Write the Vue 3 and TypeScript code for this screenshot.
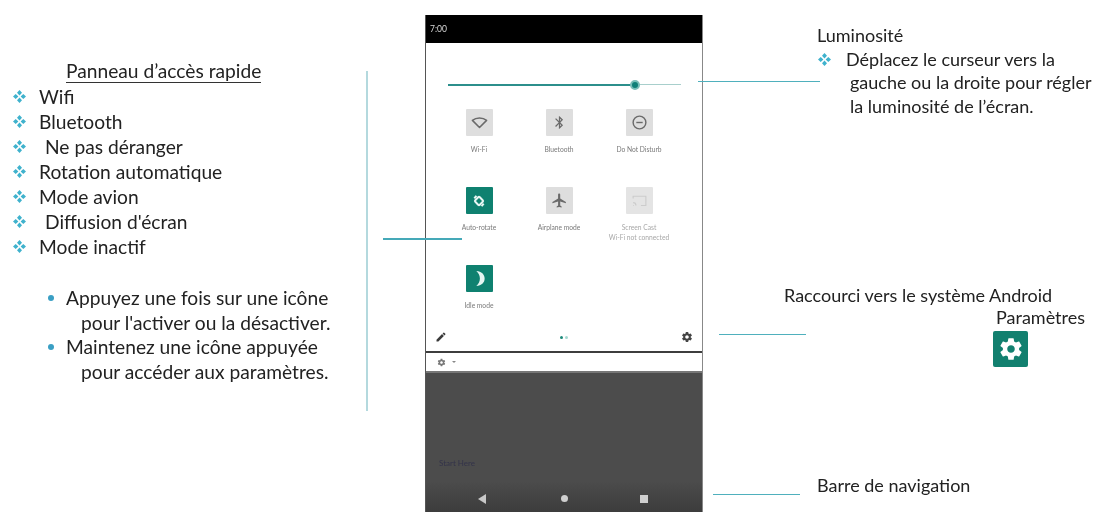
<script setup lang="ts">
interface Tile {
  label: string;
  sub?: string;
  icon: string;
  state: 'off' | 'on' | 'muted';
}

const features = [
  { label: 'Wifi', nudge: false },
  { label: 'Bluetooth', nudge: false },
  { label: 'Ne pas déranger', nudge: true },
  { label: 'Rotation automatique', nudge: false },
  { label: 'Mode avion', nudge: false },
  { label: "Diffusion d'écran", nudge: true },
  { label: 'Mode inactif', nudge: false },
];

const tips = [
  ['Appuyez une fois sur une icône', "pour l'activer ou la désactiver."],
  ['Maintenez une icône appuyée', 'pour accéder aux paramètres.'],
];

const tiles: Tile[] = [
  { label: 'Wi-Fi', icon: 'wifi', state: 'off' },
  { label: 'Bluetooth', icon: 'bluetooth', state: 'off' },
  { label: 'Do Not Disturb', icon: 'dnd', state: 'off' },
  { label: 'Auto-rotate', icon: 'rotate', state: 'on' },
  { label: 'Airplane mode', icon: 'plane', state: 'off' },
  { label: 'Screen Cast', sub: 'Wi-Fi not connected', icon: 'cast', state: 'muted' },
  { label: 'Idle mode', icon: 'moon', state: 'on' },
];

const gearPath =
  'M19.43 12.98c.04-.32.07-.64.07-.98s-.03-.66-.07-.98l2.11-1.65c.19-.15.24-.42.12-.64l-2-3.46c-.12-.22-.39-.3-.61-.22l-2.49 1c-.52-.4-1.08-.73-1.69-.98l-.38-2.65C14.46 2.18 14.25 2 14 2h-4c-.25 0-.46.18-.49.42l-.38 2.65c-.61.25-1.17.59-1.69.98l-2.49-1c-.23-.09-.49 0-.61.22l-2 3.46c-.13.22-.07.49.12.64l2.11 1.65c-.04.32-.07.65-.07.98s.03.66.07.98l-2.11 1.65c-.19.15-.24.42-.12.64l2 3.46c.12.22.39.3.61.22l2.49-1c.52.4 1.08.73 1.69.98l.38 2.65c.03.24.24.42.49.42h4c.25 0 .46-.18.49-.42l.38-2.65c.61-.25 1.17-.59 1.69-.98l2.49 1c.23.09.49 0 .61-.22l2-3.46c.12-.22.07-.49-.12-.64l-2.11-1.65zM12 15.5c-1.93 0-3.5-1.57-3.5-3.5s1.57-3.5 3.5-3.5 3.5 1.57 3.5 3.5-1.57 3.5-3.5 3.5z';

const diamondPath =
  'M6.5 0 9 2.700 6.500 5.400 4 2.700zM6.500 7.600 9 10.300 6.500 13 4 10.300zM2.700 4 5.400 6.500 2.700 9 0 6.500zM10.300 4 13 6.500 10.300 9 7.600 6.500z';

// traits de renvoi entre le téléphone et les légendes
const connectors = [
  { left: 366, top: 71, width: 2, height: 340, color: '#b4d9de' },
  { left: 383, top: 238, width: 79, height: 2, color: '#45a9b8' },
  { left: 698, top: 81, width: 122, height: 1, color: '#4fb0bd' },
  { left: 719, top: 334, width: 87, height: 1, color: '#4fb0bd' },
  { left: 713, top: 494, width: 87, height: 1, color: '#4fb0bd' },
];
</script>

<template>
  <div class="slide">
    <section class="left">
      <h2 class="panel-title">Panneau d’accès rapide</h2>
      <ul class="features">
        <li v-for="f in features" :key="f.label">
          <svg class="diamonds" width="13" height="13" viewBox="0 0 13 13">
            <path :d="diamondPath" />
          </svg>
          <span :class="{ nudge: f.nudge }">{{ f.label }}</span>
        </li>
      </ul>
      <ul class="tips">
        <li v-for="t in tips" :key="t[0]">
          <span class="dot"></span>
          <div>
            <div>{{ t[0] }}</div>
            <div class="indent">{{ t[1] }}</div>
          </div>
        </li>
      </ul>
    </section>

    <section class="phone">
      <div class="status">7:00</div>
      <div class="panel">
        <div class="slider">
          <div class="fill"></div>
          <div class="thumb"></div>
          <div class="rest"></div>
        </div>
        <div class="tiles">
          <div v-for="t in tiles" :key="t.label" class="tile" :class="t.state">
            <div class="tile-box">
              <svg v-if="t.icon === 'wifi'" viewBox="0 0 24 24" width="17" height="17" fill="none" stroke="#6a6a6a" stroke-width="2.200" stroke-linejoin="round">
                <path d="M12 19 2 9C7.500 4.500 16.500 4.500 22 9z" />
              </svg>
              <svg v-else-if="t.icon === 'bluetooth'" viewBox="0 0 24 24" width="15" height="15" fill="#6a6a6a">
                <path d="M17.710 7.710 12 2h-1v7.590L6.410 5 5 6.410 10.590 12 5 17.590 6.410 19 11 14.410V22h1l5.710-5.710-4.300-4.290 4.300-4.290zM13 5.830l1.880 1.880L13 9.590V5.830zm1.880 10.460L13 18.170v-3.760l1.880 1.880z" />
              </svg>
              <svg v-else-if="t.icon === 'dnd'" viewBox="0 0 24 24" width="17" height="17" fill="none" stroke="#6a6a6a" stroke-width="2">
                <circle cx="12" cy="12" r="9" />
                <path d="M7.500 12h9" />
              </svg>
              <svg v-else-if="t.icon === 'rotate'" viewBox="0 0 24 24" width="14" height="14" fill="none" stroke="#e8f6f3" stroke-width="3.400">
                <rect x="6.500" y="6.500" width="11" height="11" rx="2" transform="rotate(45 12 12)" />
                <path d="M4 7.500 7.500 3M20 16.500 16.500 21" />
              </svg>
              <svg v-else-if="t.icon === 'plane'" viewBox="0 0 24 24" width="17" height="17" fill="#6a6a6a">
                <path d="M21 16v-2l-8-5V3.500c0-.83-.67-1.500-1.500-1.500S10 2.670 10 3.500V9l-8 5v2l8-2.500V19l-2 1.500V22l3.500-1 3.500 1v-1.500L13 19v-5.500l8 2.500z" />
              </svg>
              <svg v-else-if="t.icon === 'cast'" viewBox="0 0 24 24" width="17" height="17" fill="none" stroke="#cccccc" stroke-width="1.600">
                <path d="M3 9V6h18v13h-7M3 19h1M3 15c2.500 0 4 1.500 4 4" />
              </svg>
              <svg v-else viewBox="0 0 24 24" width="19" height="19" fill="#e6f5f2">
                <path d="M8 2.500c6.500.5 10.500 4.200 10.500 9.500S14.500 21 8 21.500c3-3 4.500-5.800 4.500-9.500S11 5.500 8 2.500z" />
              </svg>
            </div>
            <div class="tile-label">{{ t.label }}</div>
            <div v-if="t.sub" class="tile-label">{{ t.sub }}</div>
          </div>
        </div>
        <div class="panel-foot">
          <svg viewBox="0 0 24 24" width="12" height="12" fill="#3a3a3a">
            <path d="M3 17.250V21h3.750L17.810 9.940l-3.750-3.750L3 17.250zM20.710 7.040c.39-.39.39-1.020 0-1.410l-2.340-2.340c-.39-.39-1.020-.39-1.410 0l-1.830 1.830 3.750 3.750 1.830-1.830z" />
          </svg>
          <div class="pager"><i></i><i class="faint"></i></div>
          <svg viewBox="0 0 24 24" width="12" height="12" fill="#444">
            <path :d="gearPath" />
          </svg>
        </div>
      </div>
      <div class="strip">
        <svg viewBox="0 0 24 24" width="9" height="9" fill="#777">
          <path :d="gearPath" />
        </svg>
        <span class="caret"></span>
      </div>
      <div class="shade">
        <div class="hint">Start Here</div>
        <div class="nav">
          <span class="back"></span>
          <span class="home"></span>
          <span class="recent"></span>
        </div>
      </div>
    </section>

    <section class="right">
      <div class="brightness">
        <div>Luminosité</div>
        <div class="bright-row">
          <svg class="diamonds" width="13" height="13" viewBox="0 0 13 13">
            <path :d="diamondPath" />
          </svg>
          <span>Déplacez le curseur vers la</span>
        </div>
        <div class="bright-more">gauche ou la droite pour régler</div>
        <div class="bright-more">la luminosité de l’écran.</div>
      </div>
      <div class="shortcut">
        <div>Raccourci vers le système Android</div>
        <div class="shortcut-name">Paramètres</div>
        <div class="settings-tile">
          <svg viewBox="0 0 24 24" width="26" height="26" fill="#fff">
            <path :d="gearPath" />
          </svg>
        </div>
      </div>
      <div class="navbar-note">Barre de navigation</div>
    </section>

    <div
      v-for="(c, i) in connectors"
      :key="i"
      class="connector"
      :style="{ left: c.left + 'px', top: c.top + 'px', width: c.width + 'px', height: c.height + 'px', background: c.color }"
    ></div>
  </div>
</template>

<style scoped>
.slide {
  position: relative;
  display: flex;
  width: 1098px;
  height: 512px;
  overflow: hidden;
  background: #fff;
  font-family: Lato, "Open Sans", sans-serif;
  font-size: 19.2px;
  color: #222;
}

.left {
  width: 425px;
  flex-shrink: 0;
  padding-top: 60px;
  box-sizing: border-box;
  filter: blur(0.3px);
}

.panel-title {
  margin: 0 0 1px 66px;
  width: fit-content;
  font-size: 19.2px;
  font-weight: 400;
  line-height: 22px;
  border-bottom: 1px solid #333;
}

.features {
  margin: 0;
  padding: 0 0 0 13px;
  list-style: none;
  line-height: 25px;
}

.features li {
  display: flex;
  align-items: center;
  gap: 13px;
}

.diamonds {
  flex-shrink: 0;
  fill: #3fb2cd;
}

.nudge {
  margin-left: 6px;
}

.tips {
  margin: 27px 0 0;
  padding: 0 0 0 48px;
  list-style: none;
  line-height: 24.500px;
}

.tips li {
  display: flex;
  gap: 12px;
}

.dot {
  width: 6px;
  height: 6px;
  margin-top: 9px;
  border-radius: 50%;
  background: #3a9fc4;
  flex-shrink: 0;
}

.indent {
  padding-left: 15px;
}

.phone {
  display: flex;
  flex-direction: column;
  width: 278px;
  height: 497px;
  margin-top: 15px;
  flex-shrink: 0;
  box-sizing: border-box;
  border-left: 1px solid #555;
  border-right: 1px solid #888;
  filter: blur(0.5px);
}

.status {
  height: 28px;
  padding: 9px 0 0 4px;
  box-sizing: border-box;
  background: #000;
  color: #d8d8d8;
  font-size: 8.500px;
  line-height: 10px;
}

.panel {
  display: flex;
  flex-direction: column;
  height: 310px;
  box-sizing: border-box;
  background: #fff;
  border-bottom: 2px solid #3d3d3d;
}

.slider {
  position: relative;
  height: 4px;
  margin: 40px 21px 0 22px;
}

.fill {
  position: absolute;
  left: 0;
  top: 0.500px;
  width: 187px;
  height: 2.500px;
  background: #2c8f8c;
}

.rest {
  position: absolute;
  left: 187px;
  right: 0;
  top: 1px;
  height: 1px;
  background: #a8cfcc;
}

.thumb {
  position: absolute;
  left: 182px;
  top: -3px;
  z-index: 1;
  width: 6px;
  height: 6px;
  border: 2px solid #79bdb8;
  border-radius: 50%;
  background: #0f7f78;
}

.tiles {
  display: grid;
  grid-template-columns: repeat(3, 80px);
  grid-template-rows: 78px 78px 56px;
  margin: 22px 0 0 13px;
}

.tile {
  display: flex;
  flex-direction: column;
  align-items: center;
  font-size: 6.700px;
  font-weight: 400;
  line-height: 10px;
  color: #7a7a7a;
}

.tile-box {
  display: flex;
  align-items: center;
  justify-content: center;
  width: 27px;
  height: 27px;
  margin-bottom: 8px;
  border-radius: 1px;
  background: #dedede;
}

.tile.on .tile-box {
  background: #0f8170;
}

.tile.muted .tile-box {
  background: #e4e4e4;
}

.tile.muted .tile-label {
  color: #a8a8a8;
}

.tile-label {
  white-space: nowrap;
}

.panel-foot {
  display: flex;
  align-items: center;
  justify-content: space-between;
  margin-top: auto;
  padding: 0 9px 8px 9px;
}

.pager {
  display: flex;
  gap: 2px;
}

.pager i {
  width: 3px;
  height: 3px;
  border-radius: 50%;
  background: #1e8a7b;
}

.pager i.faint {
  background: #a5d8d0;
}

.strip {
  display: flex;
  align-items: center;
  gap: 6px;
  height: 18px;
  padding-left: 11px;
  background: #fff;
  border-bottom: 2px solid #777;
}

.caret {
  width: 0;
  height: 0;
  border-left: 2px solid transparent;
  border-right: 2px solid transparent;
  border-top: 2px solid #888;
}

.shade {
  display: flex;
  flex-direction: column;
  justify-content: flex-end;
  flex: 1;
  background: linear-gradient(#4c4c4c 0, #4c4c4c 78%, #3c3c3c 100%);
}

.hint {
  margin: 0 0 17px 13px;
  font-size: 8px;
  line-height: 10px;
  color: #33334a;
}

.nav {
  display: flex;
  align-items: center;
  height: 27px;
  padding-left: 52px;
}

.back {
  width: 0;
  height: 0;
  margin-right: 75px;
  border-top: 5px solid transparent;
  border-bottom: 5px solid transparent;
  border-right: 8px solid #c8c8c8;
}

.home {
  width: 7px;
  height: 7px;
  margin-right: 72px;
  border-radius: 50%;
  background: #cfcfcf;
}

.recent {
  width: 8px;
  height: 8px;
  background: #cfcfcf;
}

.right {
  position: relative;
  flex: 1;
  font-size: 18px;
  white-space: nowrap;
  filter: blur(0.3px);
}

.brightness {
  padding: 24px 0 0 114px;
  line-height: 23.500px;
}

.bright-row {
  display: flex;
  align-items: center;
  gap: 15px;
  margin-left: 1px;
}

.bright-more {
  padding-left: 33px;
}

.shortcut {
  margin: 166px 0 0 81px;
  line-height: 22px;
}

.shortcut-name {
  margin-left: 212px;
}

.settings-tile {
  display: flex;
  align-items: center;
  justify-content: center;
  width: 35px;
  height: 36px;
  margin: 3px 0 0 209px;
  border-radius: 2px;
  background: #12806f;
}

.navbar-note {
  margin: 107px 0 0 114px;
  line-height: 22px;
}

.connector {
  position: absolute;
}
</style>
